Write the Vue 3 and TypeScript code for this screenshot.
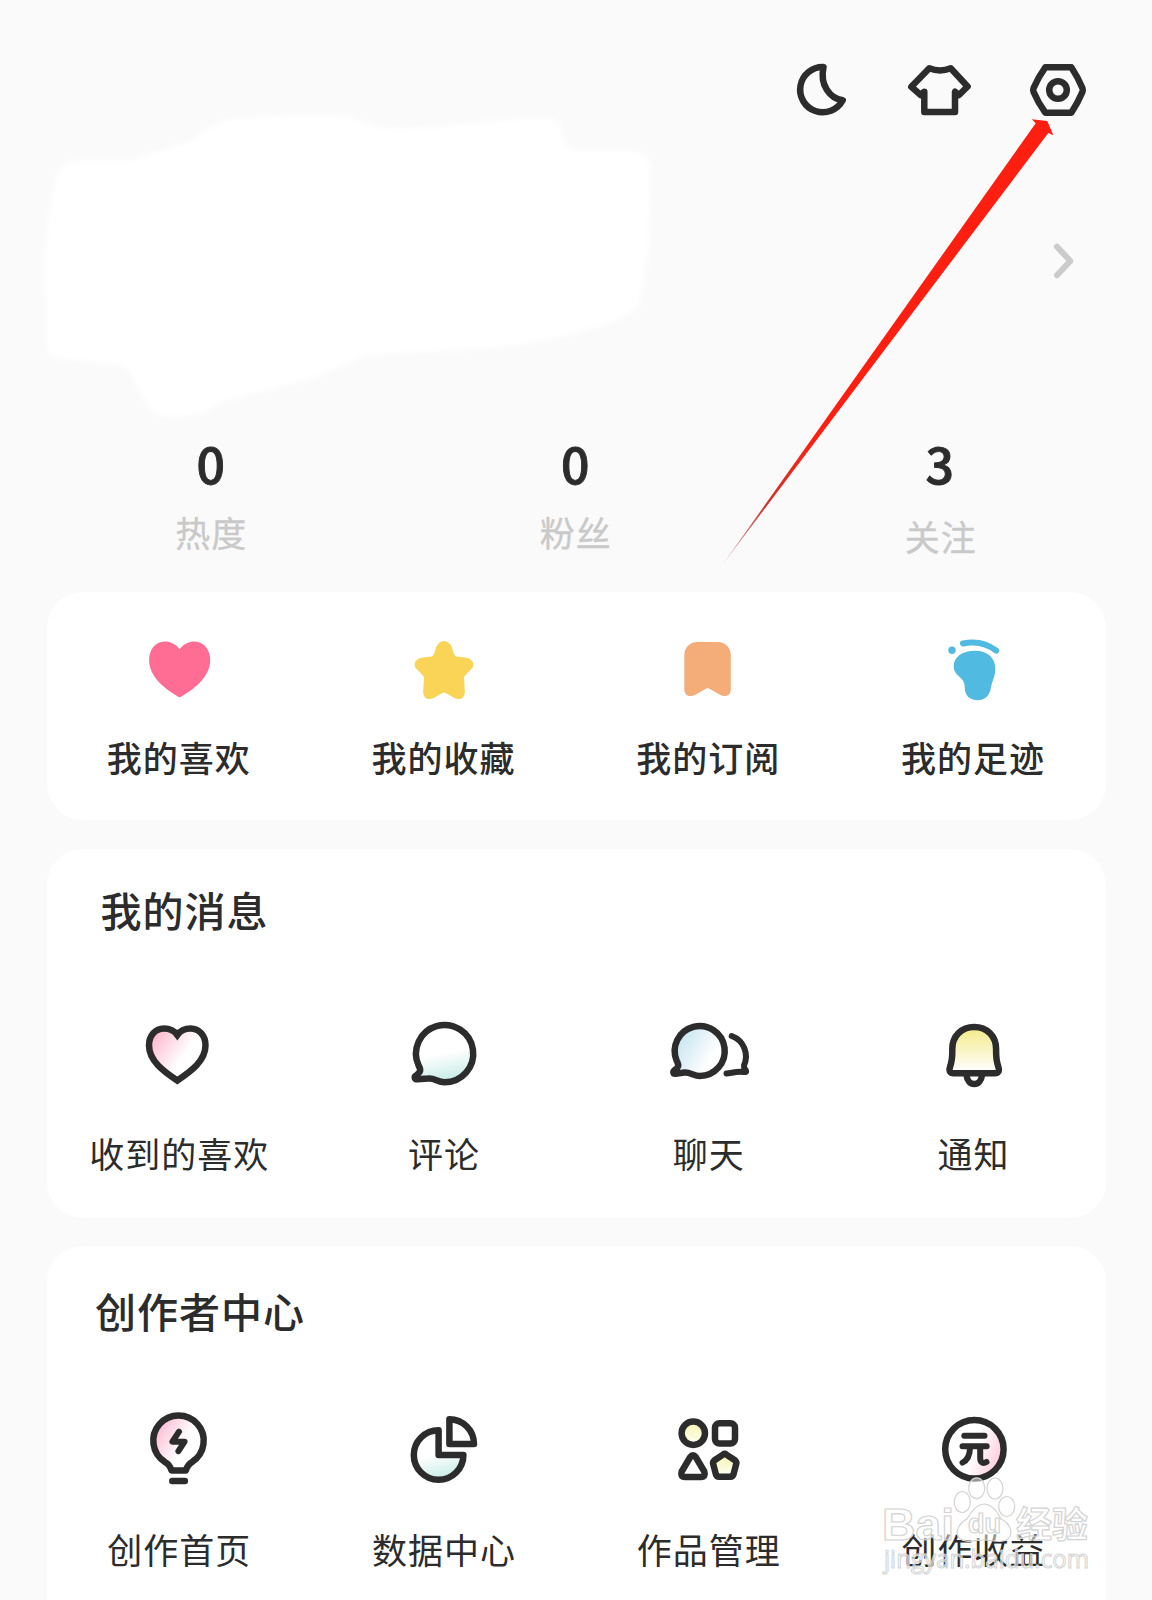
<script setup lang="ts">
interface Stat {
  value: number
  label: string
  low?: boolean
}

interface Entry {
  icon: string
  label: string
}

const stats: Stat[] = [
  { value: 0, label: '热度' },
  { value: 0, label: '粉丝' },
  { value: 3, label: '关注', low: true },
]

const shortcuts: Entry[] = [
  { icon: 'heart-solid', label: '我的喜欢' },
  { icon: 'star', label: '我的收藏' },
  { icon: 'bookmark', label: '我的订阅' },
  { icon: 'foot', label: '我的足迹' },
]

const messages: Entry[] = [
  { icon: 'heart', label: '收到的喜欢' },
  { icon: 'comment', label: '评论' },
  { icon: 'chat', label: '聊天' },
  { icon: 'bell', label: '通知' },
]

const creator: Entry[] = [
  { icon: 'bulb', label: '创作首页' },
  { icon: 'pie', label: '数据中心' },
  { icon: 'works', label: '作品管理' },
  { icon: 'yuan', label: '创作收益' },
]
</script>

<template>
  <main class="page">
    <svg class="defs" width="0" height="0">
      <defs>
        <linearGradient id="pink" x1="0.05" y1="0.2" x2="0.6" y2="0.55">
          <stop offset="0" stop-color="#ffb9cf" /><stop offset="1" stop-color="#fff" />
        </linearGradient>
        <linearGradient id="mint" x1="0.45" y1="0.5" x2="0.55" y2="1">
          <stop offset="0" stop-color="#fff" /><stop offset="1" stop-color="#c4ebe5" />
        </linearGradient>
        <linearGradient id="sky" x1="0.05" y1="0.25" x2="0.75" y2="0.65">
          <stop offset="0" stop-color="#c5e4f0" /><stop offset="1" stop-color="#fff" />
        </linearGradient>
        <linearGradient id="lemon" x1="0" y1="0" x2="0" y2="1">
          <stop offset="0.1" stop-color="#f5ec92" /><stop offset="0.9" stop-color="#fffdf8" />
        </linearGradient>
        <linearGradient id="rose" x1="1" y1="0.75" x2="0.5" y2="0.55">
          <stop offset="0" stop-color="#ffc3d6" /><stop offset="1" stop-color="#fff" />
        </linearGradient>
        <linearGradient id="cream" x1="0" y1="0" x2="0" y2="1">
          <stop offset="0.2" stop-color="#f8f6bb" /><stop offset="1" stop-color="#fffff8" />
        </linearGradient>
      </defs>
    </svg>

    <header class="topbar">
      <svg class="icon line" viewBox="0 0 80 80">
        <path d="M41.500 17.100A22.600 22.600 0 1 0 60.700 50.300C48 48.500 37.500 35 41.500 17.100Z" />
      </svg>
      <svg class="icon line" viewBox="0 0 80 80">
        <path d="M29.300 18.300Q40 22.600 50.700 18.300L67.600 36.500L59 45L55 41.700V62H24.300V41.700L20.700 45L11.300 36.800Z" />
      </svg>
      <svg class="icon line" viewBox="0 0 80 80">
        <path d="M27.300 17.300H53.300Q60 27.500 64.400 38Q65.200 40 64.400 42Q60 52.500 53.300 62.700H27.300Q20 52.500 15.600 42Q14.800 40 15.600 38Q20 27.500 27.300 17.300Z" />
        <circle cx="40" cy="40" r="8.800" />
      </svg>
    </header>

    <section class="profile">
      <svg class="blank" viewBox="0 0 640 330">
        <path d="M41 61L98 61L122 53L163 40Q185 19 210 18Q270 14 318 16Q340 27 365 29L408 26L510 17Q531 16 533 35Q533 50 552 50L592 49Q619 49 621 69L619 150L609 206Q588 223 563 228Q510 246 449 249L335 256L282 279L196 301L171 314Q132 323 121 310L105 284Q102 265 80 264L39 260Q14 259 16 240L14 153L22 93Q27 65 41 61Z" />
      </svg>
      <svg class="chevron" viewBox="0 0 24 40"><path d="M5 5.700L18.300 20L5 34.300" /></svg>
    </section>

    <section class="stats">
      <div v-for="s in stats" :key="s.label" class="stat">
        <strong>{{ s.value }}</strong>
        <span :class="{ low: s.low }">{{ s.label }}</span>
      </div>
    </section>

    <section class="card shortcuts">
      <div v-for="e in shortcuts" :key="e.label" class="entry">
        <svg class="icon" viewBox="0 0 80 80">
          <path v-if="e.icon === 'heart-solid'" fill="#ff6d94" d="M41.700 19.300C38 14 32 11.500 27 11.500C17 11.500 11.100 20 11.100 30C11.100 47 27.500 59.500 41.700 67.500C56 59.500 72.200 47 72.200 30C72.200 20 66 11.500 56.500 11.500C51 11.500 45.500 14 41.700 19.300Z" />
          <path v-else-if="e.icon === 'star'" fill="#f9d457" d="M41 11.100C44.500 11.100 47 13.500 48.800 17Q50.800 24.500 52.300 26Q53.500 26.900 62 27.400C70 28.400 72.800 34.500 68 39.500Q61 46 60.900 47.500Q61.200 49 61.800 61C62 69 56.500 71 50.500 67.400Q42 62.500 41 62.500Q40 62.500 31.500 67.400C25.500 71 20 69 20.200 61Q20.800 49 21.100 47.500Q21 46 14 39.500C9.200 34.500 12 28.400 20 27.400Q28.500 26.900 29.700 26Q31.200 24.500 33.200 17C35 13.500 37.500 11.100 41 11.100Z" />
          <path v-else-if="e.icon === 'bookmark'" fill="#f4ac79" d="M29 12H50.200C57 12 62.800 17.500 62.800 25V59.500C62.800 65.500 57 67.800 52 64.800L39.700 57.700L27.300 64.800C22 67.800 16.300 65.500 16.300 59.500V25C16.300 17.500 22 12 29 12Z" />
          <template v-else>
            <circle cx="19" cy="20.300" r="3.700" fill="#50bae0" />
            <path fill="none" stroke="#50bae0" stroke-width="6" stroke-linecap="round" d="M30 13.500Q49 9.500 63.200 20.600" />
            <path fill="#50bae0" d="M41.700 20.700C55 20.700 62.300 28 62.300 39C62.300 47 59 51 57.600 59C56.500 66 51.500 70.200 44.500 70.200C37 70.200 31.800 65.500 31.800 58C32.200 46 20.700 47 20.700 36.500C20.700 27 29 20.700 41.700 20.700Z" />
          </template>
        </svg>
        <span>{{ e.label }}</span>
      </div>
    </section>

    <section class="card messages">
      <h2>我的消息</h2>
      <div class="row">
        <div v-for="e in messages" :key="e.label" class="entry">
          <svg class="icon line" viewBox="0 0 80 80">
            <path v-if="e.icon === 'heart'" class="sharp" fill="url(#pink)" d="M39.300 19C36 14.500 31 12.600 26 12.600C17 12.600 11 20 11 29.500C11 45 26 55.500 39.300 64.500C52.500 55.500 67.500 45 67.500 29.500C67.500 20 61.500 12.600 52.500 12.600C47.500 12.600 42.500 14.500 39.300 19Z" />
            <path v-else-if="e.icon === 'comment'" fill="url(#mint)" d="M15.600 49.500A28.600 28.600 0 1 1 41.600 66.200C34 66 32 61.800 25 62.500L14.500 63.300C11.500 63.500 11 61 12.800 59.700C17.500 56 18.500 54.500 15.600 49.500Z" />
            <template v-else-if="e.icon === 'chat'">
              <path fill="url(#sky)" d="M8.600 44.500A25 25 0 1 1 31.800 60C26 60 22 56 16.500 56.600L7.500 57.700C5 57.900 4.800 55.700 6.300 54.400C10.500 51.500 11.500 50 8.600 44.500Z" />
              <path class="thin" d="M63.700 20C76 24.500 81 38 76 49.500C75.500 52 77.500 53.500 78 54.800C78.400 56.400 77 56.200 75 56C68.500 55.300 64 57 58.500 57.500" />
            </template>
            <template v-else>
              <path d="M33.700 60A7.600 9 0 0 0 48.800 60" />
              <path fill="url(#lemon)" d="M41.200 11C28.500 11 19.300 20 19.300 33C19.300 42 19.500 43.500 17.300 50C15.800 54 16 57.300 21 57.300H61.400C66.400 57.300 66.600 54 65.100 50C62.900 43.500 63.100 42 63.100 33C63.100 20 53.900 11 41.200 11Z" />
            </template>
          </svg>
          <span>{{ e.label }}</span>
        </div>
      </div>
    </section>

    <section class="card creator">
      <h2>创作者中心</h2>
      <div class="row">
        <div v-for="e in creator" :key="e.label" class="entry">
          <svg class="icon line" viewBox="0 0 80 80">
            <template v-if="e.icon === 'bulb'">
              <path fill="url(#pink)" d="M33.500 62.500Q32 56.500 26.700 53.800A25.200 25.200 0 1 1 54.300 53.800Q49.500 56.500 47.800 62.500Z" />
              <path d="M34.300 73H46.800" />
              <path class="thin" d="M41 23.700L34.400 33.700H46.600L40.400 43.200" />
            </template>
            <template v-else-if="e.icon === 'pie'">
              <path fill="url(#mint)" d="M35.600 22.200V47H60.400A24.800 24.800 0 1 1 35.600 22.200Z" />
              <path d="M46.400 11.200V36H71A24.800 24.800 0 0 0 46.400 11.200Z" />
            </template>
            <template v-else-if="e.icon === 'works'">
              <circle cx="25.300" cy="25.300" r="11.700" fill="url(#cream)" />
              <rect x="47" y="15.200" width="20" height="20.300" rx="4.500" />
              <path d="M22.300 49Q25 45.500 27.700 49L36.300 63.500Q38 69 33 69H17Q12 69 13.700 63.500Z" />
              <path fill="url(#cream)" d="M55 46.600Q56.700 45.300 58.400 46.600L66.900 52.300Q68.900 54 68.200 56L65.600 66Q64.800 68.700 62.500 68.700H50.900Q48.600 68.700 47.800 66L45.200 56Q44.500 54 46.500 52.300Z" />
            </template>
            <template v-else>
              <circle cx="41.400" cy="41.300" r="29.200" fill="url(#rose)" />
              <path class="thin" d="M31.300 27.700H51.500M29.500 38.300H53.700M37 39C37 48 34 52.500 29.500 54.600M47.200 39V50C47.200 55.500 51 55.500 53.500 54" />
            </template>
          </svg>
          <span>{{ e.label }}</span>
        </div>
      </div>
    </section>

    <svg class="arrow" viewBox="0 0 340 460">
      <defs>
        <linearGradient id="fade" gradientUnits="userSpaceOnUse" x1="3" y1="454" x2="95" y2="325">
          <stop offset="0" stop-color="#b4675f" stop-opacity="0.5" />
          <stop offset="0.45" stop-color="#c8362c" />
          <stop offset="1" stop-color="#ff1f10" />
        </linearGradient>
      </defs>
      <path fill="url(#fade)" d="M3 454L315.700 13.300L311.700 9.300L327.300 11L333.300 25.300L328.300 23Z" />
    </svg>

    <svg class="watermark" viewBox="0 0 220 110">
      <text class="brand" x="2" y="60" textLength="72" lengthAdjust="spacingAndGlyphs">Bai</text>
      <path d="M79 58C74 52 80 42 87 39C92 30 97 24 104 24C112 24 117 31 121 39C130 43 134 53 128 59C121 64 112 60 104 60C95 60 86 64 79 58Z" />
      <ellipse cx="82.300" cy="22" rx="8" ry="10.500" />
      <ellipse cx="96.700" cy="8.300" rx="8" ry="10.500" />
      <ellipse cx="115" cy="8.500" rx="8" ry="10.500" />
      <ellipse cx="126.700" cy="26.500" rx="8" ry="10" />
      <text class="du" x="88" y="53">du</text>
      <text class="jy" x="136" y="58">经验</text>
      <text class="url" x="4" y="88" textLength="205" lengthAdjust="spacingAndGlyphs">jingyan.baidu.com</text>
    </svg>
  </main>
</template>

<style>
body {
  margin: 0;
  background: #fafafa;
}
</style>

<style scoped>
.page {
  position: relative;
  box-sizing: border-box;
  width: 1152px;
  height: 1600px;
  overflow: hidden;
  background: #fafafa;
  color: #2c2c2c;
  font-family: "Noto Sans CJK SC", sans-serif;
}
.defs {
  position: absolute;
}
.icon {
  display: block;
  width: 80px;
  height: 80px;
  overflow: visible;
}
.line {
  fill: none;
  stroke: #2c2c2c;
  stroke-width: 6.5;
  stroke-linecap: round;
  stroke-linejoin: round;
}
.line .thin {
  stroke-width: 6;
}
.line .sharp {
  stroke-linejoin: miter;
}
.topbar {
  display: flex;
  justify-content: flex-end;
  gap: 38px;
  padding: 50px 54px 0 0;
  height: 50px;
}
.profile {
  display: flex;
  justify-content: space-between;
  align-items: flex-start;
  height: 330px;
  padding: 0 76px 0 30px;
}
.blank {
  width: 640px;
  height: 330px;
  fill: #fff;
  filter: blur(3px);
}
.chevron {
  width: 24px;
  height: 40px;
  margin-top: 141px;
  fill: none;
  stroke: #cbcbcb;
  stroke-width: 6;
  stroke-linecap: round;
  stroke-linejoin: round;
}
.stats {
  display: grid;
  grid-template-columns: repeat(3, 364.5px);
  padding-left: 28.5px;
  height: 162px;
}
.stat {
  display: flex;
  flex-direction: column;
  align-items: center;
}
.stat strong {
  margin-top: 2px;
  font-weight: 500;
  font-size: 50px;
  line-height: 60px;
  -webkit-text-stroke: 0.9px #2c2c2c;
}
.stat span {
  margin-top: 16px;
  padding-left: 1px;
  font-size: 35px;
  letter-spacing: 1px;
  line-height: 48px;
  color: #c9c9c9;
  -webkit-text-stroke: 0.3px #c9c9c9;
}
.stat .low {
  margin-top: 20px;
  padding-left: 2px;
}
.card {
  box-sizing: border-box;
  margin-left: 47px;
  width: 1059px;
  border-radius: 36px;
  background: #fff;
}
.row,
.shortcuts {
  display: grid;
  grid-template-columns: repeat(4, 264.75px);
  margin-left: -1px;
}
.shortcuts {
  margin-left: 47px;
  height: 228px;
  padding-top: 38px;
}
.entry {
  display: flex;
  flex-direction: column;
  align-items: center;
  font-size: 35px;
  letter-spacing: 1px;
  line-height: 48px;
  white-space: nowrap;
}
.entry span {
  padding-left: 2px;
}
.shortcuts .entry {
  position: relative;
  left: -1px;
  font-weight: 500;
}
.shortcuts .entry span {
  margin-top: 23px;
  padding-left: 1px;
}
h2 {
  margin: 0;
  font-weight: 500;
  font-size: 41px;
  letter-spacing: 1px;
  line-height: 56px;
}
.messages {
  height: 369px;
  margin-top: 29px;
  margin-bottom: 28px;
  padding-top: 32px;
}
.messages h2 {
  padding-left: 53.5px;
}
.messages .row {
  margin-top: 79px;
}
.messages .entry span {
  margin-top: 33px;
}
.creator {
  height: 400px;
  padding-top: 36px;
}
.creator h2 {
  padding-left: 48px;
}
.creator .row {
  margin-top: 70px;
}
.creator .entry span {
  margin-top: 37px;
}
.arrow {
  position: absolute;
  left: 720px;
  top: 110px;
  width: 340px;
  height: 460px;
}
.watermark {
  position: absolute;
  left: 880px;
  top: 1480px;
  width: 220px;
  height: 110px;
  overflow: visible;
  fill: rgba(255, 255, 255, 0.5);
  stroke: #d3d3d3;
  stroke-width: 1.2;
}
.brand {
  font: bold 45px "Liberation Sans", sans-serif;
}
.du {
  font: bold 27px "Liberation Sans", sans-serif;
}
.jy {
  font: bold 36px "Noto Sans CJK SC", sans-serif;
}
.url {
  font: 25px "Open Sans", sans-serif;
  stroke-width: 1;
}
</style>
